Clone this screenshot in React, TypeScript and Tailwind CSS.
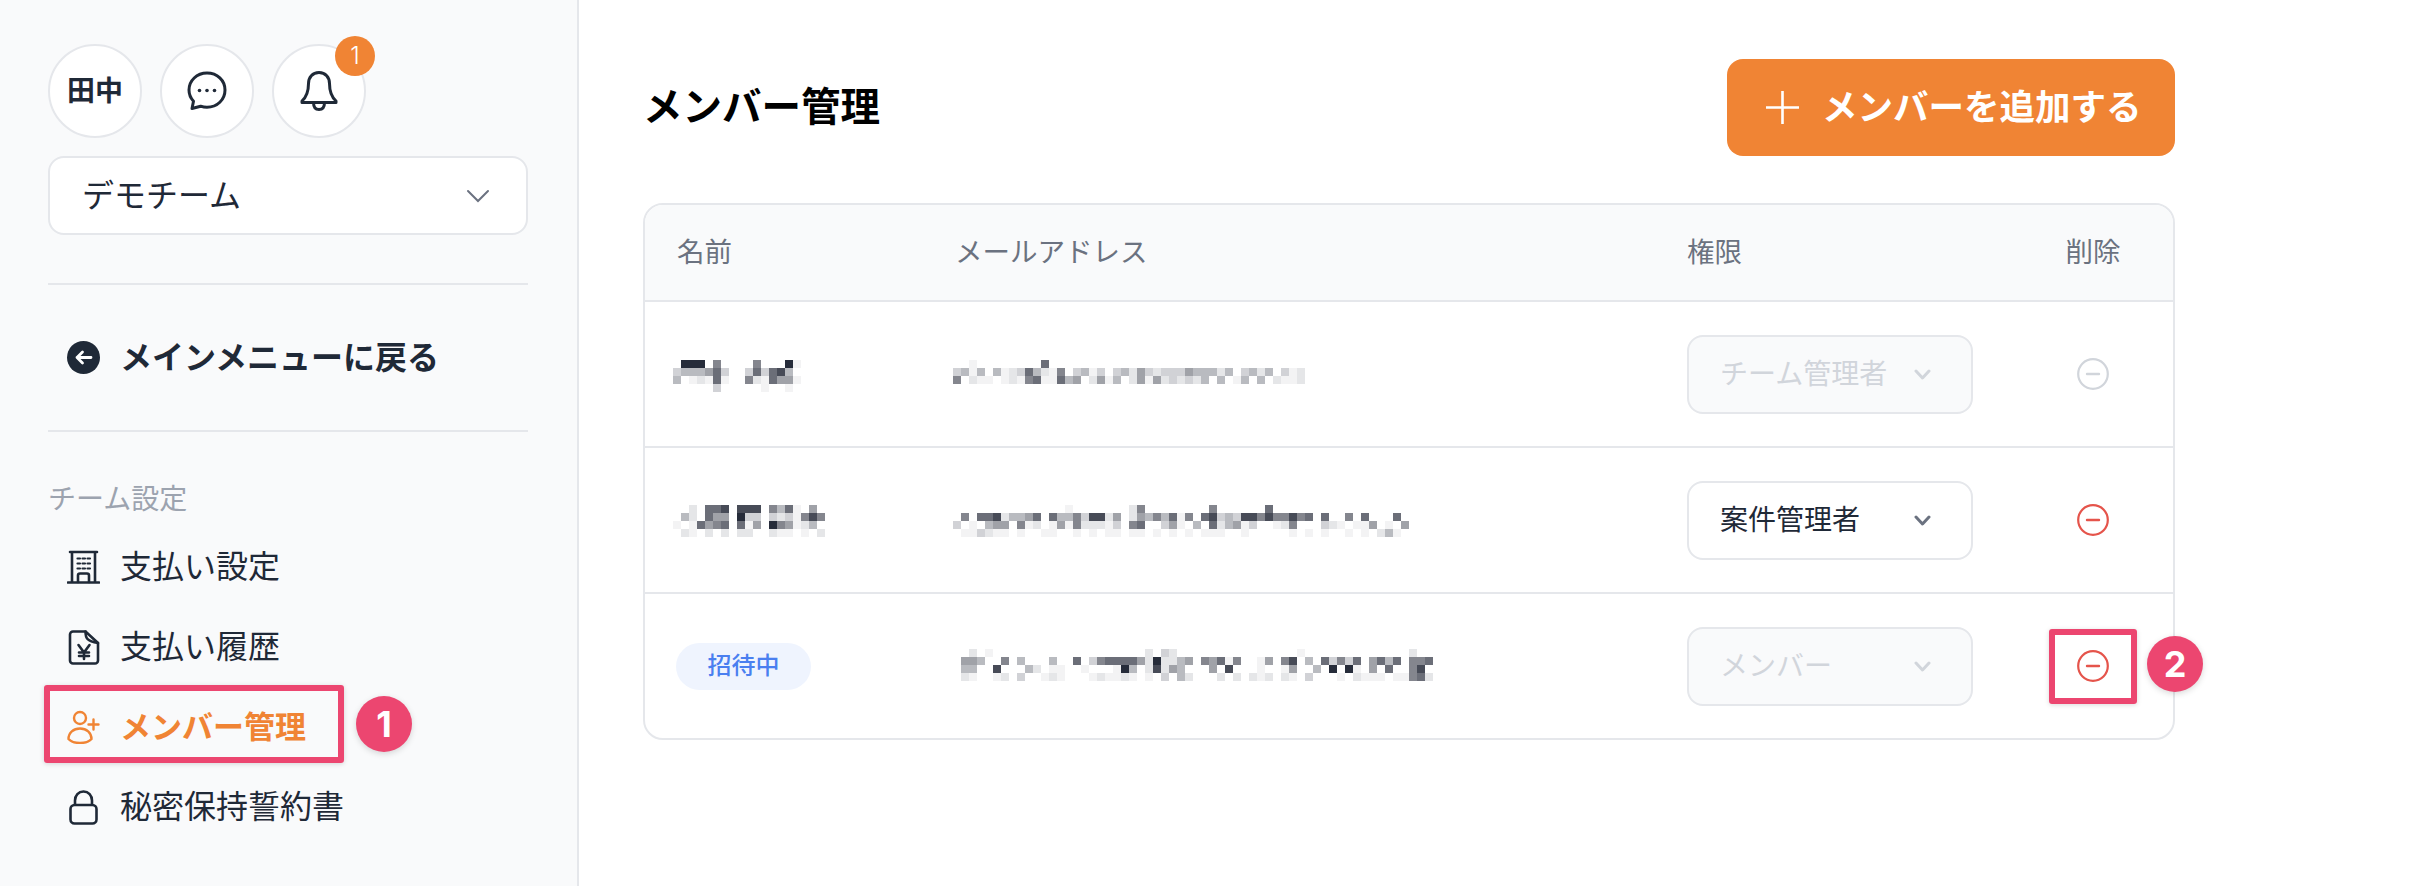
const SHADES = ["#ffffff", "#f3f3f4", "#e5e6e8", "#d1d2d6", "#b9bbc0", "#a0a2a8", "#84868e", "#6b6e78", "#474b57", "#262c3a"];

// 人名とメールはモザイク済み: 8pxセルの濃淡をそのまま持つ
const NAME_1 = ["0099906000 0600091", "0344457300 3737840", "0401217100 6217551", "0000003000 0010010"];
const NAME_2 = ["0002077808 8806471050", "0042075509 3303231686", "0101756707 1509651240", "0021020202 2002110102"];
const EMAIL_1 = [
  "0001000000 0070000000 0000000000 0000000000 00000",
  "0341404123 7421603413 0342532333 5444240342 40312",
  "0602110121 6711745025 1402515232 3240401404 02112",
];
const EMAIL_2 = [
  "0000000000 0000010000 0002600000 0006000000 7000000000 00000000",
  "0060778244 5707446388 2502546471 6078343886 8668670700 60700070",
  "0301045506 1201516222 1306700351 0407245130 0126000321 01150105",
  "0011321101 0011001010 1101101010 1011100100 0001010100 10102410",
];
const EMAIL_3 = [
  "0020100000 0000000000 0000203200 0000000000 0001000000 0000000200",
  "0554006040 0040070367 7775292245 0657160015 0680407363 7057470667",
  "0440080004 2011001000 1940282540 0050800010 0150040909 1050700680",
  "0210012030 0121000121 1210103042 0002020212 0210300010 2111011672",
];

function Mosaic({ rows, className }: { rows: string[]; className?: string }) {
  const cells = rows.map((r) => r.replace(/ /g, ""));
  const cols = Math.max(...cells.map((r) => r.length));
  return (
    <svg width={cols * 8} height={rows.length * 8} shapeRendering="crispEdges" className={className}>
      {cells.map((row, y) =>
        row.split("").map((c, x) =>
          c === "0" ? null : <rect key={`${x}-${y}`} x={x * 8} y={y * 8} width={8} height={8} fill={SHADES[Number(c)]} />,
        ),
      )}
    </svg>
  );
}

function ChatIcon() {
  return (
    <svg width="40" height="40" viewBox="0 0 40 40" fill="none" stroke="#1f2937" strokeWidth="3" strokeLinejoin="round">
      <path d="M20 2C9.8 2 2 9.6 2 19c0 4.4 1.7 8.2 4.5 11.2L5 37.5l8.6-2.3c2 .7 4.200 1.100 6.400 1.100 10.200 0 18-7.600 18-17.300S30.200 2 20 2z" />
      <circle cx="12.500" cy="19.500" r="1.800" fill="#1f2937" stroke="none" />
      <circle cx="20" cy="19.500" r="1.800" fill="#1f2937" stroke="none" />
      <circle cx="27.500" cy="19.500" r="1.800" fill="#1f2937" stroke="none" />
    </svg>
  );
}

function BellIcon() {
  return (
    <svg width="38" height="40" viewBox="0 0 38 40" fill="none" stroke="#1f2937" strokeWidth="3" strokeLinejoin="round">
      <path d="M19 1.500c-6.500 0-10.500 4.800-10.500 11 0 8-1.500 13-6.500 17.500v1.500h34V30c-5-4.500-6.500-9.500-6.500-17.500 0-6.200-4-11-10.500-11z" />
      <path d="M13.500 31.500c0 4.500 2.200 7 5.500 7s5.500-2.500 5.500-7" />
    </svg>
  );
}

function BuildingIcon() {
  return (
    <svg width="33" height="34" viewBox="0 0 33 34" fill="none" stroke="#1f2937" strokeWidth="2.600" strokeLinecap="round">
      <path d="M3 2h27M5 2v30M28 2v30M1 32.500h31" />
      <path d="M11 32v-6.500a2 2 0 0 1 2-2h7a2 2 0 0 1 2 2V32" />
      <path d="M10.500 8.500h2.500M15.500 8.500h2.500M20.500 8.500h2.500M10.500 13.500h2.500M15.500 13.500h2.500M20.500 13.500h2.500M10.500 18.500h2.500M15.500 18.500h2.500M20.500 18.500h2.500" strokeWidth="2.200" />
    </svg>
  );
}

function YenDocIcon() {
  return (
    <svg width="33" height="35" viewBox="0 0 33 35" fill="none" stroke="#1f2937" strokeWidth="2.600" strokeLinejoin="round" strokeLinecap="round">
      <path d="M6 1.500h12.500L31 13v17.500a3 3 0 0 1-3 3H6a3 3 0 0 1-3-3v-26a3 3 0 0 1 3-3z" />
      <path d="M18.500 1.500c0 7 1.500 9.500 12.500 11.500" />
      <path d="M11.500 15l5.500 7.500 5.500-7.500M17 22.500V29M12 22.500h10M12 26h10" />
    </svg>
  );
}

function PersonPlusIcon() {
  return (
    <svg width="33" height="34" viewBox="0 0 33 34" fill="none" stroke="#f08434" strokeWidth="2.400" strokeLinecap="round">
      <circle cx="13" cy="8" r="6" />
      <path d="M1.500 29c0-6.500 5-10.500 11.500-10.500S24.500 22.500 24.500 29c-2.500 2.800-6.500 4-11.500 4S4 31.800 1.500 29z" />
      <path d="M26.500 9.500v10M21.500 14.500h10" />
    </svg>
  );
}

function LockIcon() {
  return (
    <svg width="33" height="35" viewBox="0 0 33 35" fill="none" stroke="#1f2937" strokeWidth="2.600">
      <rect x="3.500" y="15" width="26" height="18.500" rx="4" />
      <path d="M8 15v-4.500c0-5.200 3.500-9 8.500-9s8.500 3.800 8.500 9V15" />
    </svg>
  );
}

function SmallChevron({ color }: { color: string }) {
  return (
    <svg width="17" height="11" viewBox="0 0 17 11" fill="none" stroke={color} strokeWidth="3" strokeLinecap="round" strokeLinejoin="round">
      <path d="M2 2l6.500 7L15 2" />
    </svg>
  );
}

function MinusCircle({ color }: { color: string }) {
  return (
    <svg width="32" height="32" viewBox="0 0 32 32" fill="none" stroke={color} strokeWidth="2.200">
      <circle cx="16" cy="16" r="14.800" />
      <path d="M10 16h12" strokeWidth="2.400" strokeLinecap="round" />
    </svg>
  );
}

function MarkBadge({ n, className }: { n: number; className: string }) {
  return (
    <span className={`absolute flex h-14 w-14 items-center justify-center rounded-full bg-[#ec4670] text-[36px] font-bold text-white shadow-[0_2px_6px_rgba(0,0,0,0.15)] ${className}`}>
      {n}
    </span>
  );
}

function RoleSelect({ label, disabled }: { label: string; disabled?: boolean }) {
  return (
    <div
      className={
        disabled
          ? "flex h-[79px] w-[286px] items-center justify-between rounded-2xl border-2 border-[#e5e7eb] bg-[#f9fafb] pl-[31px] pr-[40px] text-[28px] text-[#d1d5db]"
          : "flex h-[79px] w-[286px] items-center justify-between rounded-2xl border-2 border-[#e5e7eb] bg-white pl-[31px] pr-[40px] text-[28px] text-[#1f2937]"
      }
    >
      <span>{label}</span>
      <SmallChevron color={disabled ? "#d1d5db" : "#6b7280"} />
    </div>
  );
}

const MENU = [
  { label: "支払い設定", icon: <BuildingIcon /> },
  { label: "支払い履歴", icon: <YenDocIcon /> },
];

export default function App() {
  return (
    <div className="flex min-h-screen bg-white text-[#1f2937] [font-family:Inter,'Noto_Sans_CJK_JP',sans-serif]">
      <aside className="w-[579px] shrink-0 border-r-2 border-[#e5e7eb] bg-[#f9fafb] pl-12 pr-[49px] pt-11">
        <div className="flex gap-[18px]">
          <div className="flex h-[94px] w-[94px] items-center justify-center rounded-full border-2 border-[#e5e7eb] bg-white text-[28px] font-bold">田中</div>
          <div className="flex h-[94px] w-[94px] items-center justify-center rounded-full border-2 border-[#e5e7eb] bg-white">
            <ChatIcon />
          </div>
          <div className="relative flex h-[94px] w-[94px] items-center justify-center rounded-full border-2 border-[#e5e7eb] bg-white">
            <BellIcon />
            <span className="absolute left-[61px] top-[-10px] flex h-10 w-10 items-center justify-center rounded-full bg-[#f08434] text-[24px] font-light text-white">1</span>
          </div>
        </div>
        <div className="mt-[18px] flex h-[79px] items-center justify-between rounded-2xl border-2 border-[#e5e7eb] bg-white pl-[32px] pr-[36px] text-[32px]">
          <span>デモチーム</span>
          <svg width="24" height="14" viewBox="0 0 24 14" fill="none" stroke="#6b7280" strokeWidth="2" strokeLinecap="round">
            <path d="M2 2l10 10L22 2" />
          </svg>
        </div>
        <div className="mt-12 h-0.5 bg-[#e5e7eb]" />
        <div className="flex h-[145px] items-center gap-5 pl-[19px] text-[32px] font-bold">
          <svg width="33" height="33" viewBox="0 0 33 33" fill="none">
            <circle cx="16.500" cy="16.500" r="16.500" fill="#1f2937" />
            <path d="M24 16.500H10M15.500 11l-5.500 5.500 5.500 5.500" stroke="#ffffff" strokeWidth="2.800" strokeLinecap="round" strokeLinejoin="round" />
          </svg>
          <span>メインメニューに戻る</span>
        </div>
        <div className="h-0.5 bg-[#e5e7eb]" />
        <div className="mt-[49px] text-[28px] leading-9 text-[#9ca3af]">チーム設定</div>
        <nav className="mt-2.5 text-[32px]">
          {MENU.map((m) => (
            <div key={m.label} className="flex h-20 items-center gap-5 pl-[19px]">
              {m.icon}
              <span>{m.label}</span>
            </div>
          ))}
          <div className="relative flex h-20 items-center gap-5 pl-[19px] text-[31px] font-bold text-[#f08434]">
            <PersonPlusIcon />
            <span>メンバー管理</span>
            <span className="absolute left-[-4px] top-[-2px] h-[78px] w-[300px] rounded-[3px] border-[6px] border-[#ec4670] shadow-[0_1px_5px_rgba(0,0,0,0.15)]" />
            <MarkBadge n={1} className="left-[308px] top-[9px]" />
          </div>
          <div className="flex h-20 items-center gap-5 pl-[19px]">
            <LockIcon />
            <span>秘密保持誓約書</span>
          </div>
        </nav>
      </aside>

      <main className="w-[1596px] pl-16 pt-[59px]">
        <div className="flex items-center justify-between">
          <h1 className="text-[39.5px] font-bold text-black">メンバー管理</h1>
          <button className="flex h-[97px] w-[448px] items-center gap-[23px] rounded-2xl bg-[#f08434] pl-[39px] text-[35.5px] font-semibold text-white">
            <svg width="33" height="33" viewBox="0 0 33 33" fill="none" stroke="#ffffff" strokeWidth="2.600">
              <path d="M16.500 0v33M0 16.500h33" />
            </svg>
            メンバーを追加する
          </button>
        </div>

        <div className="mt-[47px] rounded-[20px] border-2 border-[#e5e7eb]">
          <div className="flex h-[97px] items-center rounded-t-[18px] border-b-2 border-[#e5e7eb] bg-[#f9fafb] text-[27.5px] text-[#6b7280]">
            <div className="w-[310px] pl-8">名前</div>
            <div className="w-[732px]">メールアドレス</div>
            <div className="w-[346px]">権限</div>
            <div className="w-[120px] text-center">削除</div>
          </div>

          <div className="flex h-[146px] items-center border-b-2 border-[#e5e7eb]">
            <div className="w-[313px] pl-5">
              <Mosaic rows={NAME_1} className="mt-1" />
            </div>
            <div className="w-[729px]">
              <Mosaic rows={EMAIL_1} className="ml-[-13px] mt-[-4px]" />
            </div>
            <div className="w-[346px]">
              <RoleSelect label="チーム管理者" disabled />
            </div>
            <div className="flex w-[120px] justify-center">
              <MinusCircle color="#d1d5db" />
            </div>
          </div>

          <div className="flex h-[146px] items-center border-b-2 border-[#e5e7eb]">
            <div className="w-[313px] pl-5">
              <Mosaic rows={NAME_2} className="mt-0.5" />
            </div>
            <div className="w-[729px]">
              <Mosaic rows={EMAIL_2} className="ml-[-13px] mt-0.5" />
            </div>
            <div className="w-[346px]">
              <RoleSelect label="案件管理者" />
            </div>
            <div className="flex w-[120px] justify-center">
              <MinusCircle color="#e5544b" />
            </div>
          </div>

          <div className="flex h-[144px] items-center">
            <div className="w-[313px] pl-[31px]">
              <span className="flex h-[47px] w-[135px] items-center justify-center rounded-full bg-[#eff4fe] text-[24px] font-medium text-[#4a7ff0]">招待中</span>
            </div>
            <div className="w-[729px]">
              <Mosaic rows={EMAIL_3} className="ml-[-5px] mt-[-2px]" />
            </div>
            <div className="w-[346px]">
              <RoleSelect label="メンバー" disabled />
            </div>
            <div className="flex w-[120px] justify-center">
              <div className="relative h-8 w-8">
                <MinusCircle color="#e5544b" />
                <span className="absolute left-[-28px] top-[-21px] h-[75px] w-[88px] rounded-[3px] border-[6px] border-[#ec4670] shadow-[0_1px_5px_rgba(0,0,0,0.15)]" />
                <MarkBadge n={2} className="left-[70px] top-[-14px]" />
              </div>
            </div>
          </div>
        </div>
      </main>
    </div>
  );
}
